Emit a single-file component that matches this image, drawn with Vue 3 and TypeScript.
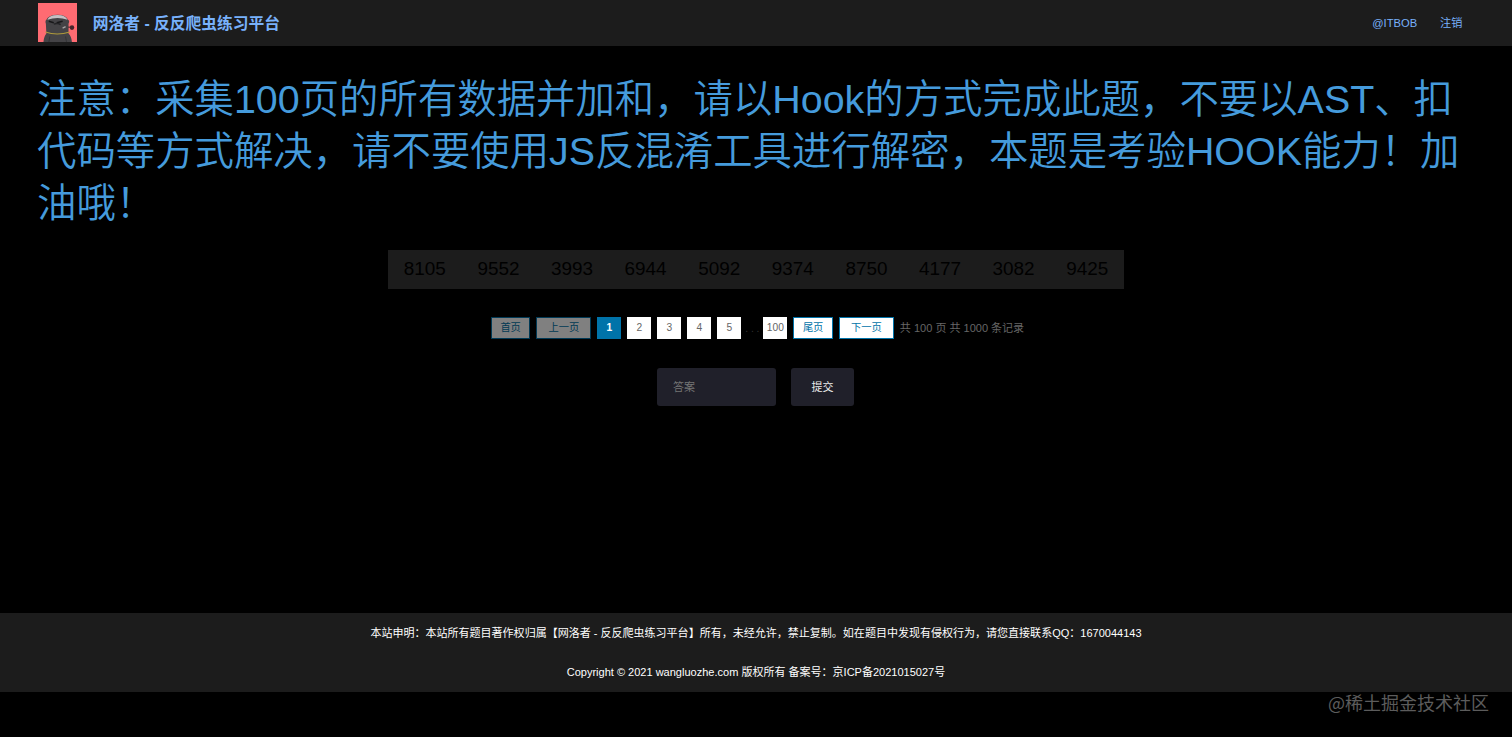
<script setup lang="ts">
const noticeLines: string[] = [
  '注意：采集100页的所有数据并加和，请以Hook的方式完成此题，不要以AST、扣',
  '代码等方式解决，请不要使用JS反混淆工具进行解密，本题是考验HOOK能力！加',
  '油哦！',
]
const values: number[] = [8105, 9552, 3993, 6944, 5092, 9374, 8750, 4177, 3082, 9425]
const pages: number[] = [1, 2, 3, 4, 5]
const currentPage = 1
</script>

<template>
  <div class="page">
    <header class="header">
      <svg class="logo" viewBox="0 0 40 40" aria-hidden="true">
        <rect width="40" height="40" fill="#ff6b72" />
        <path d="M5.5 40 C6 35 7 33 8.5 31 L8 21 Q7 18 8.500 17 Q11 12 20 12 Q28 12 30.500 17 Q32.500 18 31 21 L31 31 Q34 34 34.500 40Z" fill="#444346" />
        <path d="M9.500 17 Q11 12.500 20 12.300 Q28 12.500 30 17 Q20 13.500 9.500 17Z" fill="#c5bfc2" />
        <path d="M11 18.500 L16 20 M19 20 L25 18.500" stroke="#171719" stroke-width="1.500" />
        <path d="M16 21.500 Q20 20 23 22" stroke="#242427" stroke-width="1.500" fill="none" />
        <path d="M25 25.500 L28 24" stroke="#aaa5a6" stroke-width="1.300" />
        <path d="M7.500 29.500 Q19 33.500 32.500 29.500" stroke="#b09b3b" stroke-width="1.200" fill="none" />
        <path d="M12 34 L11 40 M28 34 L29 40" stroke="#343437" stroke-width="1" />
        <path d="M30.500 24.500 H33" stroke="#40272b" stroke-width="1" />
        <circle cx="34.500" cy="25" r="2.300" fill="#44252b" />
      </svg>
      <span class="brand">网洛者 - 反反爬虫练习平台</span>
      <nav class="nav">
        <a>@ITBOB</a>
        <a>注销</a>
      </nav>
    </header>

    <main class="main">
      <h1 class="notice">
        <span v-for="line in noticeLines" :key="line" class="notice-line">{{ line }}</span>
      </h1>

      <div class="values">
        <span v-for="v in values" :key="v">{{ v }}</span>
      </div>

      <div class="pager">
        <button class="edge disabled first">首页</button>
        <button class="edge disabled step">上一页</button>
        <button v-for="p in pages" :key="p" class="num" :class="{ active: p === currentPage }">{{ p }}</button>
        <span class="dots">. . .</span>
        <button class="num">100</button>
        <button class="edge first">尾页</button>
        <button class="edge step">下一页</button>
        <span class="total">共 100 页 共 1000 条记录</span>
      </div>

      <form class="answer" @submit.prevent>
        <input type="text" placeholder="答案" />
        <button type="submit">提交</button>
      </form>
    </main>

    <footer class="footer">
      <p>本站申明：本站所有题目著作权归属【网洛者 - 反反爬虫练习平台】所有，未经允许，禁止复制。如在题目中发现有侵权行为，请您直接联系QQ：1670044143</p>
      <p>Copyright © 2021 wangluozhe.com 版权所有 备案号：京ICP备2021015027号</p>
    </footer>
    <div class="watermark">@稀土掘金技术社区</div>
  </div>
</template>

<style>
body {
  background: #000;
}
</style>

<style scoped>
.page {
  box-sizing: border-box;
  height: 737px;
  overflow: hidden;
  display: flex;
  flex-direction: column;
  background: #000;
  font-family: "Liberation Sans", "Noto Sans CJK SC", sans-serif;
  font-size: 11.02px;
}
.header {
  box-sizing: border-box;
  flex: none;
  height: 46.4px;
  padding: 0 49.5px 1px 38px;
  display: flex;
  align-items: center;
  background: #1c1c1c;
  color: #78b1fb;
}
.logo {
  width: 39.4px;
  height: 39.4px;
}
.brand {
  margin-left: 15.4px;
  font-size: 15.75px;
  font-weight: 700;
}
.nav {
  margin-left: auto;
  display: flex;
  align-items: baseline;
  gap: 23px;
  margin-top: -1px;
  font-size: 11.2px;
}
.main {
  flex: none;
  height: 566.9px;
  display: flex;
  flex-direction: column;
  align-items: center;
}
.notice {
  box-sizing: border-box;
  width: 100%;
  margin: 26.4px 0 0;
  padding-left: 37px;
  color: #459bdc;
  font-size: 39.4px;
  font-weight: 350;
  line-height: 52px;
}
.notice-line {
  display: block;
  white-space: nowrap;
}
.values {
  width: 736px;
  height: 39.2px;
  margin-top: 21px;
  display: grid;
  grid-template-columns: repeat(10, 1fr);
  align-items: center;
  justify-items: center;
  background: #1c1c1c;
  color: #000;
  font-size: 18.9px;
}
.pager {
  height: 22px;
  margin-top: 28.4px;
  padding-left: 3px;
  display: flex;
  align-items: center;
  gap: 6px;
}
.pager button {
  box-sizing: border-box;
  height: 22px;
  padding: 0;
  border: 1px solid #fff;
  background: #fff;
  font-family: inherit;
  font-size: 10.24px;
  line-height: 20px;
}
.pager .num {
  width: 24px;
  color: #666;
}
.pager .active {
  border-color: #0073a9;
  background: #0073a9;
  color: #fff;
  font-weight: 700;
}
.pager .edge {
  border-color: #0073a9;
  color: #0073a9;
}
.pager .disabled {
  opacity: 0.5;
}
.pager .first {
  width: 39.5px;
}
.pager .step {
  width: 55px;
}
.dots {
  width: 16px;
  margin: 0 -3px;
  color: #333;
  font-size: 10.24px;
  white-space: nowrap;
  text-align: center;
}
.total {
  color: #666;
  line-height: 20px;
  margin-top: -1px;
  white-space: nowrap;
}
.answer {
  height: 38px;
  margin-top: 28.2px;
  padding-right: 1px;
  display: flex;
  gap: 15.5px;
}
.answer input,
.answer button {
  box-sizing: border-box;
  height: 38px;
  border: 0;
  border-radius: 3px;
  background: #20202a;
  font-family: inherit;
  font-size: 11.02px;
}
.answer input {
  width: 118.5px;
  padding: 0 16px;
  color: #ddd;
}
.answer input::placeholder {
  color: #757575;
}
.answer button {
  width: 63px;
  padding: 0 0 1px;
  color: #eee;
}
.footer {
  box-sizing: border-box;
  flex: none;
  height: 78.7px;
  padding-top: 0.7px;
  background: #1c1c1c;
  color: #fff;
  text-align: center;
}
.footer p {
  margin: 0;
  line-height: 39.35px;
  white-space: nowrap;
}
.watermark {
  align-self: flex-end;
  margin: -1.5px 23px 0 0;
  color: #5c5c5c;
  font-family: "Noto Sans CJK SC", sans-serif;
  font-size: 18px;
  line-height: 24px;
}
</style>
